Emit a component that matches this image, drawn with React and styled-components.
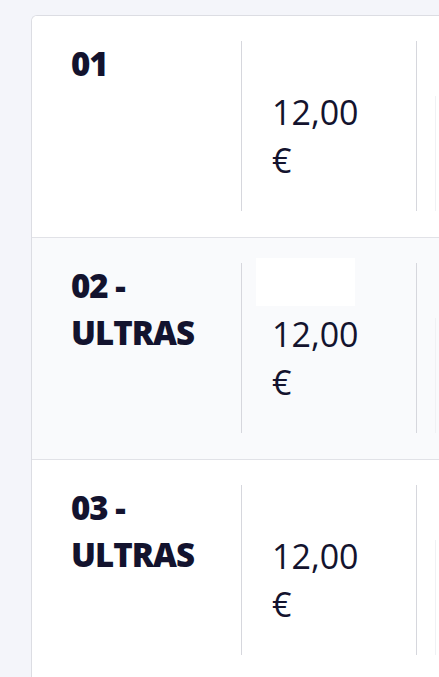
import React from "react";
import styled, { createGlobalStyle } from "styled-components";

const GlobalStyle = createGlobalStyle`
  html, body {
    margin: 0;
    padding: 0;
    background: #f4f5fa;
    overflow: hidden;
    font-family: "Open Sans", "Noto Sans", sans-serif;
    color: #13132e;
  }
`;

const Page = styled.div`
  padding: 15px 0 0 31px;
  width: 700px;
`;

const Card = styled.div`
  background: #ffffff;
  border: 1px solid #dcdde3;
  border-right: none;
  border-radius: 6px 0 0 0;
  overflow: hidden;
`;

const Row = styled.div`
  display: flex;
  height: 222px;
  box-sizing: border-box;
  padding: 25px 0 26px;
  background: ${(p) => (p.$shaded ? "#f9fafc" : "#ffffff")};
  border-bottom: 1px solid #e1e2e7;
`;

const NameCell = styled.div`
  width: 209px;
  box-sizing: border-box;
  padding-left: 39px;
`;

const Name = styled.div`
  margin-top: -1px;
  margin-bottom: -1px;
  font-size: 33px;
  line-height: 48px;
  font-weight: 800;
  letter-spacing: -1px;
`;

const PriceCell = styled.div`
  width: 175px;
  box-sizing: border-box;
  border-left: 1px solid #d6d7dd;
  padding-left: 14px;
  display: flex;
  flex-direction: column;
`;

const Badge = styled.div`
  width: 99px;
  height: 48px;
  margin-top: -5px;
  background: #ffffff;
`;

const Price = styled.div`
  width: 100px;
  margin-top: 4px;
  padding-left: 16px;
  font-size: 34px;
  line-height: 48px;
  font-weight: 400;
`;

const ActionCell = styled.div`
  flex: 1;
  border-left: 1px solid #d6d7dd;
  padding: 55px 0 0 18px;
`;

const ActionBox = styled.div`
  width: 120px;
  height: 115px;
  border-left: 1px solid #f0f1f4;
`;

const tickets = [
  { name: ["01"], price: "12,00 €" },
  { name: ["02 -", "ULTRAS"], price: "12,00 €" },
  { name: ["03 -", "ULTRAS"], price: "12,00 €" },
];

export default function App() {
  return (
    <>
      <GlobalStyle />
      <Page>
        <Card>
          {tickets.map((t, i) => (
            <Row key={i} $shaded={i === 1}>
              <NameCell>
                {t.name.map((line) => (
                  <Name key={line}>{line}</Name>
                ))}
              </NameCell>
              <PriceCell>
                <Badge />
                <Price>{t.price}</Price>
              </PriceCell>
              <ActionCell>
                <ActionBox />
              </ActionCell>
            </Row>
          ))}
        </Card>
      </Page>
    </>
  );
}
